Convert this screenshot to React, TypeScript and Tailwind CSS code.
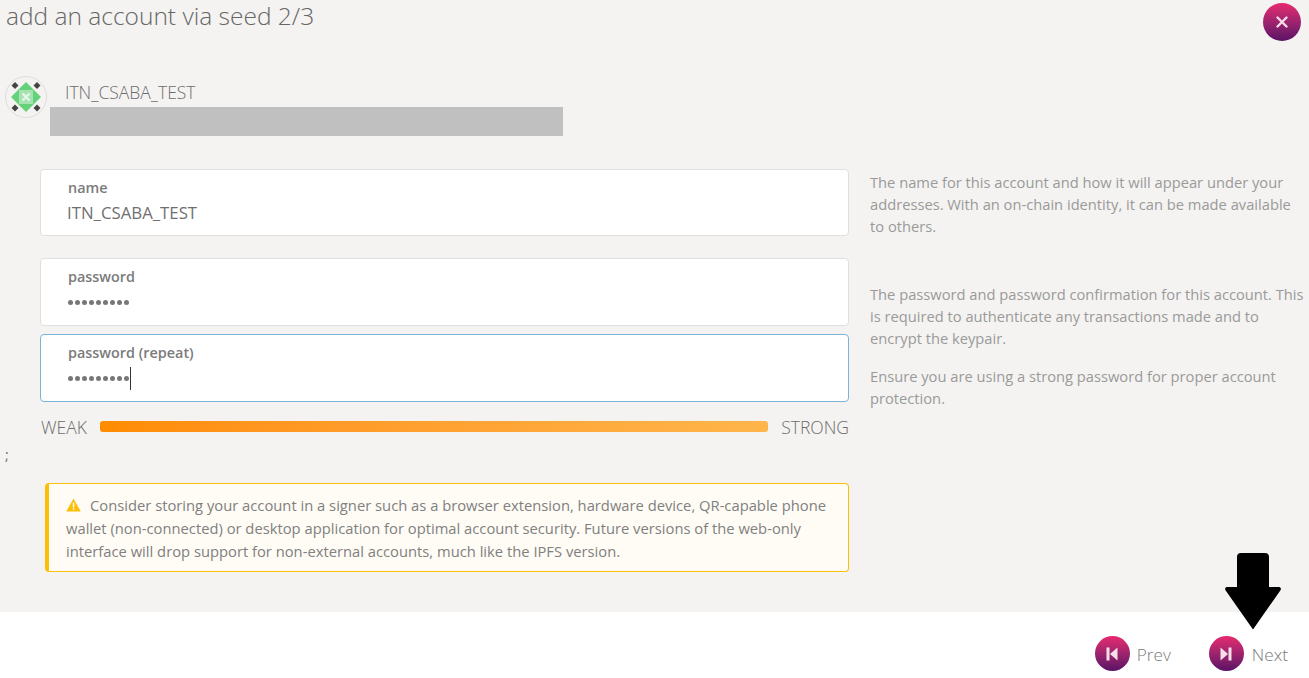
const font = "[font-family:'Open_Sans','Noto_Sans',sans-serif]";

function Identicon() {
  return (
    <svg width="42" height="42" viewBox="0 0 42 42" className="block">
      <circle cx="21" cy="21" r="20.5" fill="#f4f3f1" stroke="#dddddd" />
      <polygon points="21,6 36,21 21,36 6,21" fill="#63d27a" />
      <rect x="14" y="14" width="14" height="14" fill="#a7e3b1" />
      <path d="M17.500 17.500l7 7M24.500 17.500l-7 7" stroke="#e6f7e9" strokeWidth="2.400" />
      <polygon points="10,6 13.500,9.500 10,13 6.500,9.500" fill="#444444" />
      <polygon points="32,6 35.500,9.500 32,13 28.500,9.500" fill="#444444" />
      <polygon points="10,28.500 13.500,32 10,35.500 6.500,32" fill="#444444" />
      <polygon points="32,28.500 35.500,32 32,35.500 28.500,32" fill="#444444" />
    </svg>
  );
}

function Dots() {
  return (
    <span className="ml-px flex gap-[2px]">
      {Array.from({ length: 9 }).map((_, i) => (
        <span key={i} className="h-[5px] w-[5px] rounded-full bg-[#777777]" />
      ))}
    </span>
  );
}

function Field({
  label,
  value,
  focused,
  caret,
  dots,
  tall,
}: {
  label: string;
  value?: string;
  focused?: boolean;
  caret?: boolean;
  dots?: boolean;
  tall?: boolean;
}) {
  return (
    <div
      className={`w-[809px] rounded border bg-white pl-[27px] pt-[8px] ${tall ? "h-[68px]" : "h-[67px]"} ${
        focused ? "border-[#7cb4d8]" : "border-[#dfdfdf]"
      }`}
    >
      <div className="text-[14.4px] leading-[19px] font-semibold text-[#7b7b7b]">{label}</div>
      <div className="mt-[4px] -ml-px flex h-[24px] items-center text-[16.800px] leading-[24px] text-[#6f6f6f]">
        {value}
        {dots && <Dots />}
        {caret && <span className="ml-[1px] inline-block h-[23px] w-px bg-[#333333]" />}
      </div>
    </div>
  );
}

function Round({ children, size }: { children: React.ReactNode; size: number }) {
  return (
    <span
      className="flex shrink-0 items-center justify-center rounded-full bg-gradient-to-b from-[#e8296f] to-[#5b1166]"
      style={{ width: size, height: size }}
    >
      {children}
    </span>
  );
}

function Hint({ children, className = "" }: { children: React.ReactNode; className?: string }) {
  return <p className={`text-[14.7px] leading-[22px] text-[#9a9a9a] ${className}`}>{children}</p>;
}

export default function App() {
  return (
    <div className={`relative flex h-[678px] w-[1309px] flex-col overflow-hidden bg-white ${font}`}>
      <div className="h-[612px] bg-[#f4f3f1]">
        <div className="flex items-start justify-between pl-[6px] pr-[8px]">
          <h1 className="text-[24.5px] leading-[32px] font-light text-[#666666]">add an account via seed 2/3</h1>
          <div className="mt-[3px]">
            <Round size={38}>
              <svg width="12" height="12" viewBox="0 0 12 12">
                <path d="M1.500 1.500l9 9M10.500 1.500l-9 9" stroke="#f6dbe6" strokeWidth="2.400" strokeLinecap="round" />
              </svg>
            </Round>
          </div>
        </div>

        <div className="mt-[35px] flex pl-[5px]">
          <Identicon />
          <div className="ml-[3px] pt-[5px]">
            <div className="pl-[15px] text-[17.500px] leading-[22px] font-light text-[#6c6c6c]">ITN_CSABA_TEST</div>
            <div className="mt-[4px] h-[29px] w-[513px] bg-[#c0c0c0]" />
          </div>
        </div>

        <div className="mt-[33px] flex pl-[40px]">
          <div className="w-[809px] shrink-0">
            <Field label="name" value="ITN_CSABA_TEST" />
            <div className="mt-[22px]">
              <Field label="password" dots tall />
            </div>
            <div className="mt-[8px]">
              <Field label="password (repeat)" dots focused caret tall />
            </div>
            <div className="mt-[12px] flex h-[24px] items-center justify-between text-[17.500px] leading-[24px] font-light text-[#6c6c6c]">
              <span className="mt-[2px] ml-px">WEAK</span>
              <span className="h-[11px] w-[668px] rounded-[3px] bg-gradient-to-r from-[#ff8c00] to-[#ffb54a]" />
              <span className="mt-[2px] whitespace-nowrap">STRONG</span>
            </div>
          </div>
          <div className="ml-[21px] w-[435px] shrink-0 pt-[2px]">
            <Hint>
              The name for this account and how it will appear under your addresses. With an on-chain identity, it can
              be made available to others.
            </Hint>
            <Hint className="mt-[46px]">
              The password and password confirmation for this account. This is required to authenticate any
              transactions made and to encrypt the keypair.
            </Hint>
            <Hint className="mt-[16px]">Ensure you are using a strong password for proper account protection.</Hint>
          </div>
        </div>

        <div className="mt-[7px] pl-[5px] text-[14px] leading-[19px] text-[#6c6c6c]">;</div>

        <div className="mt-[19px] ml-[45px] h-[89px] w-[804px] rounded border border-l-[4px] border-[#fbbf08] bg-[#fffcf5] pt-[10px] pr-[12px] pl-[17px] text-[14.75px] leading-[23px] text-[#808080]">
          <svg width="15" height="14" viewBox="0 0 15 14" className="mr-[9px] inline-block align-[-1px]">
            <path d="M7.500 .5L14.800 13.500H.2z" fill="#fbbf08" />
            <rect x="6.800" y="4.500" width="1.500" height="5" fill="#fffcf5" />
            <rect x="6.800" y="10.300" width="1.500" height="1.600" fill="#fffcf5" />
          </svg>
          Consider storing your account in a signer such as a browser extension, hardware device, QR-capable phone
          wallet (non-connected) or desktop application for optimal account security. Future versions of the web-only
          interface will drop support for non-external accounts, much like the IPFS version.
        </div>
      </div>

      <div className="flex flex-1 items-start justify-end pt-[24px] pr-[21px] text-[17.200px] font-light text-[#7a7a7a]">
        <div className="flex items-start gap-[7px]">
          <Round size={35}>
            <svg width="14" height="16" viewBox="0 0 14 16">
              <rect x="1.500" y="1.500" width="3" height="13" fill="#f7dfe9" />
              <path d="M12.500 1.500v13L5 8z" fill="#f7dfe9" />
            </svg>
          </Round>
          <span className="h-[35px] leading-[37px]">Prev</span>
        </div>
        <div className="ml-[38px] flex items-start gap-[8px]">
          <Round size={35}>
            <svg width="14" height="16" viewBox="0 0 14 16">
              <rect x="9.500" y="1.500" width="3" height="13" fill="#f7dfe9" />
              <path d="M1.500 1.500v13L9 8z" fill="#f7dfe9" />
            </svg>
          </Round>
          <span className="h-[35px] leading-[37px]">Next</span>
        </div>
      </div>

      <svg width="56" height="78" viewBox="0 0 56 78" className="absolute top-[552px] left-[1225px]">
        <path
          d="M12 5a4 4 0 0 1 4-4h24a4 4 0 0 1 4 4v30h10a2 2 0 0 1 1.500 3.200L28 77.500 .5 38.200A2 2 0 0 1 2 35h10z"
          fill="#000000"
        />
      </svg>
    </div>
  );
}
